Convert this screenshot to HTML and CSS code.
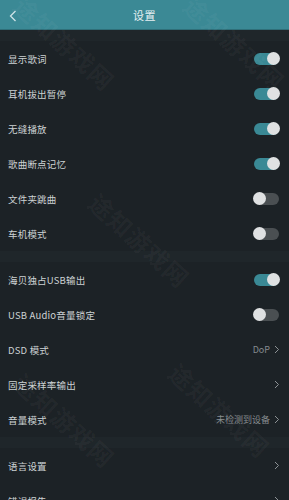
FILE: index.html
```html
<!DOCTYPE html>
<html lang="zh">
<head>
<meta charset="utf-8">
<link rel="stylesheet" href="styles.css">
</head>
<body>
<div class="app">
  <header class="topbar">
    <svg class="back" width="8" height="12" viewBox="0 0 8 12"><path d="M6.5 1 L1.5 6 L6.5 11" fill="none" stroke="#cfe3e7" stroke-width="1.3"/></svg>
    <div class="title">设置</div>
  </header>
  <div class="sep"></div>
  <section class="group">
    <div class="row"><span class="label">显示歌词</span><span class="switch on"></span></div>
    <div class="row"><span class="label">耳机拔出暂停</span><span class="switch on"></span></div>
    <div class="row"><span class="label">无缝播放</span><span class="switch on"></span></div>
    <div class="row"><span class="label">歌曲断点记忆</span><span class="switch on"></span></div>
    <div class="row"><span class="label">文件夹跳曲</span><span class="switch"></span></div>
    <div class="row"><span class="label">车机模式</span><span class="switch"></span></div>
  </section>
  <div class="sep"></div>
  <section class="group">
    <div class="row"><span class="label">海贝独占USB输出</span><span class="switch on"></span></div>
    <div class="row"><span class="label">USB Audio音量锁定</span><span class="switch"></span></div>
    <div class="row"><span class="label">DSD 模式</span><span class="value">DoP<svg class="chev" width="6" height="9" viewBox="0 0 6 9"><path d="M1 1 L4.5 4.5 L1 8" fill="none" stroke="#8d9295" stroke-width="1"/></svg></span></div>
    <div class="row"><span class="label">固定采样率输出</span><span class="value"><svg class="chev" width="6" height="9" viewBox="0 0 6 9"><path d="M1 1 L4.5 4.5 L1 8" fill="none" stroke="#8d9295" stroke-width="1"/></svg></span></div>
    <div class="row"><span class="label">音量模式</span><span class="value">未检测到设备<svg class="chev" width="6" height="9" viewBox="0 0 6 9"><path d="M1 1 L4.5 4.5 L1 8" fill="none" stroke="#8d9295" stroke-width="1"/></svg></span></div>
  </section>
  <div class="sep"></div>
  <section class="group">
    <div class="row"><span class="label">语言设置</span><span class="value"><svg class="chev" width="6" height="9" viewBox="0 0 6 9"><path d="M1 1 L4.5 4.5 L1 8" fill="none" stroke="#8d9295" stroke-width="1"/></svg></span></div>
    <div class="row"><span class="label">错误报告</span><span class="value"><svg class="chev" width="6" height="9" viewBox="0 0 6 9"><path d="M1 1 L4.5 4.5 L1 8" fill="none" stroke="#8d9295" stroke-width="1"/></svg></span></div>
  </section>
  <div class="wm wm1">途知游戏网</div>
  <div class="wm wm2">途知游戏网</div>
  <div class="wm wm3">途知游戏网</div>
  <div class="wm wm4">途知游戏网</div>
  <div class="wm wm5">途知游戏网</div>
</div>
</body>
</html>
```
FILE: styles.css
```css
html, body {
  margin: 0;
  padding: 0;
  background: #1c2226;
}
body {
  font-family: "Noto Sans CJK SC", Roboto, sans-serif;
  width: 289px;
  height: 500px;
  overflow: hidden;
}
.app {
  position: relative;
  width: 289px;
  height: 500px;
  overflow: hidden;
  background: #1c2226;
}
.topbar {
  height: 30px;
  background: #3b8995;
  display: flex;
  align-items: center;
  justify-content: center;
  position: relative;
  border-bottom: 1px solid #2f6f79;
  box-sizing: border-box;
}
.back {
  position: absolute;
  left: 9px;
  top: 10px;
}
.title {
  color: #e6f0f2;
  font-size: 11px;
  letter-spacing: 0.5px;
}
.sep {
  height: 11px;
  background: #1f262a;
}
.group {
  display: flex;
  flex-direction: column;
}
.row {
  height: 35px;
  display: flex;
  align-items: center;
  justify-content: space-between;
  padding: 0 9px 0 8px;
}
.label {
  color: #cdd2d4;
  font-size: 9.5px;
  letter-spacing: 0.2px;
}
.value {
  color: #858b8e;
  font-size: 9px;
  display: flex;
  align-items: center;
  gap: 4px;
}
.chev {
  display: block;
}
.switch {
  width: 25px;
  height: 12px;
  border-radius: 6px;
  background: #4a4f52;
  position: relative;
  margin-right: 1px;
}
.switch::after {
  content: "";
  position: absolute;
  width: 13px;
  height: 13px;
  border-radius: 50%;
  background: #dfe1e2;
  top: -0.5px;
  left: -1px;
}
.switch.on {
  background: #3a8995;
}
.switch.on::after {
  left: auto;
  right: -1px;
}
.wm {
  position: absolute;
  font-size: 24px;
  font-weight: bold;
  color: rgba(255, 255, 255, 0.045);
  transform: rotate(42deg);
  transform-origin: left top;
  white-space: nowrap;
  pointer-events: none;
  letter-spacing: 1px;
}
.wm1 { left: 30px; top: -12px; }
.wm2 { left: 200px; top: -12px; }
.wm3 { left: 105px; top: 185px; }
.wm4 { left: 30px; top: 365px; }
.wm5 { left: 185px; top: 355px; }
```
